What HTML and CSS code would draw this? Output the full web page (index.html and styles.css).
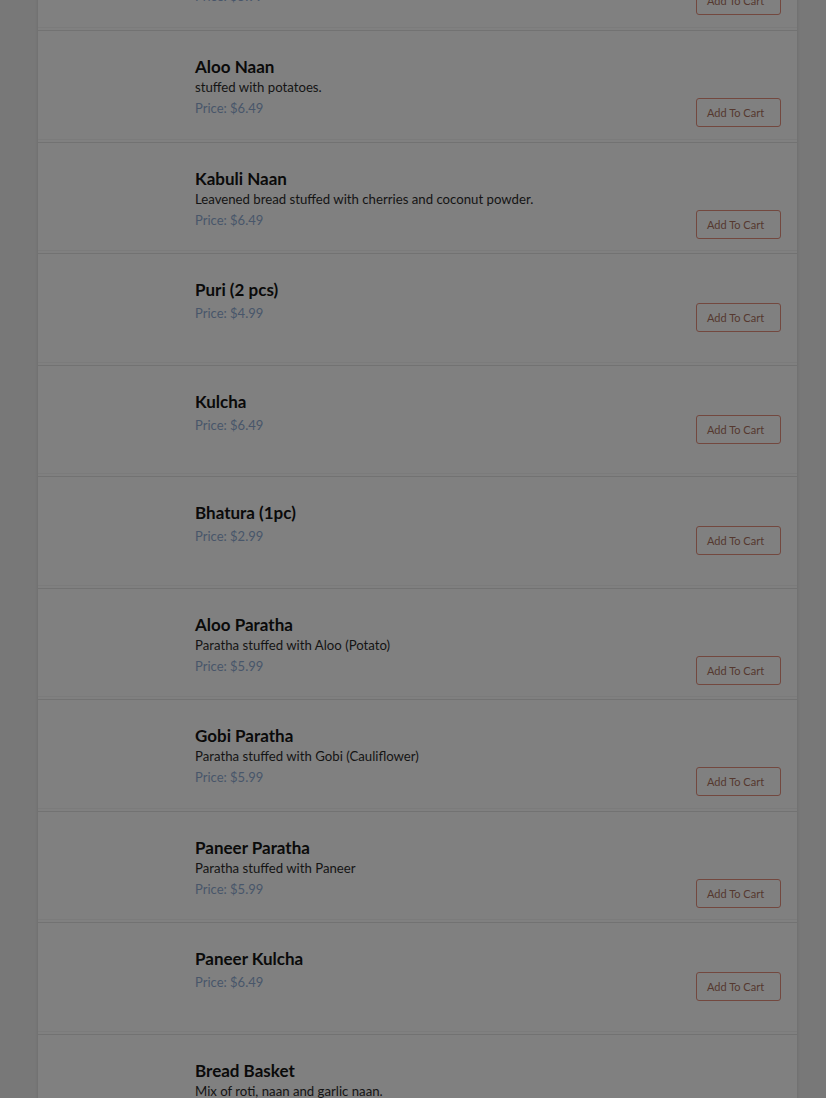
FILE: index.html
```html
<!DOCTYPE html>
<html>
<head>
<meta charset="utf-8">
<link rel="stylesheet" href="styles.css">
</head>
<body>
<div class="card">
  <div class="item first">
    <div class="thumb"></div>
    <div class="content">
      <div class="info">
        <div class="title">Garlic Naan</div>
        <div class="desc">Leavened bread with garlic.</div>
        <div class="price">Price: $5.99</div>
      </div>
      <button class="btn">Add To Cart</button>
    </div>
  </div>
  <div class="item">
    <div class="thumb"></div>
    <div class="content">
      <div class="info">
        <div class="title">Aloo Naan</div>
        <div class="desc">stuffed with potatoes.</div>
        <div class="price">Price: $6.49</div>
      </div>
      <button class="btn">Add To Cart</button>
    </div>
  </div>
  <div class="item">
    <div class="thumb"></div>
    <div class="content">
      <div class="info">
        <div class="title">Kabuli Naan</div>
        <div class="desc">Leavened bread stuffed with cherries and coconut powder.</div>
        <div class="price">Price: $6.49</div>
      </div>
      <button class="btn">Add To Cart</button>
    </div>
  </div>
  <div class="item">
    <div class="thumb"></div>
    <div class="content">
      <div class="info">
        <div class="title">Puri (2 pcs)</div>
        <div class="price">Price: $4.99</div>
      </div>
      <button class="btn">Add To Cart</button>
    </div>
  </div>
  <div class="item">
    <div class="thumb"></div>
    <div class="content">
      <div class="info">
        <div class="title">Kulcha</div>
        <div class="price">Price: $6.49</div>
      </div>
      <button class="btn">Add To Cart</button>
    </div>
  </div>
  <div class="item">
    <div class="thumb"></div>
    <div class="content">
      <div class="info">
        <div class="title">Bhatura (1pc)</div>
        <div class="price">Price: $2.99</div>
      </div>
      <button class="btn">Add To Cart</button>
    </div>
  </div>
  <div class="item">
    <div class="thumb"></div>
    <div class="content">
      <div class="info">
        <div class="title">Aloo Paratha</div>
        <div class="desc">Paratha stuffed with Aloo (Potato)</div>
        <div class="price">Price: $5.99</div>
      </div>
      <button class="btn">Add To Cart</button>
    </div>
  </div>
  <div class="item">
    <div class="thumb"></div>
    <div class="content">
      <div class="info">
        <div class="title">Gobi Paratha</div>
        <div class="desc">Paratha stuffed with Gobi (Cauliflower)</div>
        <div class="price">Price: $5.99</div>
      </div>
      <button class="btn">Add To Cart</button>
    </div>
  </div>
  <div class="item">
    <div class="thumb"></div>
    <div class="content">
      <div class="info">
        <div class="title">Paneer Paratha</div>
        <div class="desc">Paratha stuffed with Paneer</div>
        <div class="price">Price: $5.99</div>
      </div>
      <button class="btn">Add To Cart</button>
    </div>
  </div>
  <div class="item">
    <div class="thumb"></div>
    <div class="content">
      <div class="info">
        <div class="title">Paneer Kulcha</div>
        <div class="price">Price: $6.49</div>
      </div>
      <button class="btn">Add To Cart</button>
    </div>
  </div>
  <div class="item">
    <div class="thumb"></div>
    <div class="content">
      <div class="info">
        <div class="title">Bread Basket</div>
        <div class="desc">Mix of roti, naan and garlic naan.</div>
        <div class="price">Price: $9.99</div>
      </div>
      <button class="btn">Add To Cart</button>
    </div>
  </div>
</div>
</body>
</html>
```
FILE: styles.css
```css
html, body {
  margin: 0;
  padding: 0;
}
body {
  background: #787878;
  font-family: Lato, "Liberation Sans", sans-serif;
  height: 1098px;
  overflow: hidden;
}
.card {
  margin-left: 38px;
  width: 759px;
  background: #808080;
  box-shadow: 0 0 3px rgba(0, 0, 0, 0.12);
  margin-top: -81.56px;
}
.item {
  box-sizing: border-box;
  height: 109.56px;
  margin-bottom: 2px;
  border-top: 1px solid #727272;
  border-bottom: 1px solid #7b7b7b;
  display: flex;
  padding: 25px 16px 0 0;
}
.thumb {
  width: 157px;
  flex: none;
}
.content {
  flex: 1;
  display: flex;
  align-items: flex-end;
  justify-content: space-between;
  align-self: flex-start;
}
.info {
  padding-bottom: 9px;
}
.title {
  font-size: 17px;
  font-weight: 700;
  line-height: 22px;
  color: #0a0a0a;
}
.desc {
  font-size: 13.2px;
  line-height: 18px;
  color: #141414;
}
.price {
  margin-top: 2px;
  font-size: 13px;
  line-height: 20px;
  color: #48566a;
}
.btn {
  box-sizing: border-box;
  width: 85px;
  height: 29px;
  padding: 0 0 0 10px;
  text-align: left;
  background: transparent;
  border: 1px solid #73483f;
  border-radius: 3px;
  font-family: Lato, "Liberation Sans", sans-serif;
  font-size: 11px;
  color: #55382f;
}
```
